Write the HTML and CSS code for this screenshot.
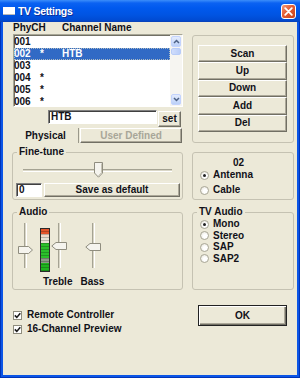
FILE: index.html
```html
<!DOCTYPE html>
<html>
<head>
<meta charset="utf-8">
<title>TV Settings</title>
<link rel="stylesheet" href="styles.css">
</head>
<body>
<div class="window">
  <div class="titlebar">
    <span class="app-icon"></span>
    <span class="title">TV Settings</span>
    <span class="close"><svg width="9" height="9" viewBox="0 0 9 9"><path d="M1.2 1.2L7.8 7.8M7.8 1.2L1.2 7.8" stroke="#fff" stroke-width="1.8" stroke-linecap="round"/></svg></span>
  </div>
  <div class="body">
    <div class="sec">
      <div class="col-left">
        <div class="list-head"><span class="h-phy">PhyCH</span><span>Channel Name</span></div>
        <div class="list">
          <div class="rows">
            <div class="row"><span class="c-num">001</span><span class="c-star"></span><span class="c-name"></span></div>
            <div class="row sel"><span class="c-num">002</span><span class="c-star">*</span><span class="c-name">HTB</span></div>
            <div class="row"><span class="c-num">003</span><span class="c-star"></span><span class="c-name"></span></div>
            <div class="row"><span class="c-num">004</span><span class="c-star">*</span><span class="c-name"></span></div>
            <div class="row"><span class="c-num">005</span><span class="c-star">*</span><span class="c-name"></span></div>
            <div class="row"><span class="c-num">006</span><span class="c-star">*</span><span class="c-name"></span></div>
          </div>
          <div class="scrollbar">
            <div class="sb-btn"><svg width="7" height="5" viewBox="0 0 7 5"><path d="M1 4L3.5 1.5L6 4" fill="none" stroke="#4D6185" stroke-width="1.5"/></svg></div>
            <div class="sb-thumb"></div>
            <div class="sb-space"></div>
            <div class="sb-btn"><svg width="7" height="5" viewBox="0 0 7 5"><path d="M1 1L3.5 3.5L6 1" fill="none" stroke="#4D6185" stroke-width="1.5"/></svg></div>
          </div>
        </div>
        <div class="name-row">
          <div class="edit name-edit">HTB</div>
          <div class="btn set-btn">set</div>
        </div>
        <div class="tabs">
          <div class="tab-on">Physical</div>
          <div class="btn disabled">User Defined</div>
        </div>
      </div>
      <div class="group btn-group">
        <div class="btn">Scan</div>
        <div class="btn">Up</div>
        <div class="btn">Down</div>
        <div class="btn">Add</div>
        <div class="btn">Del</div>
      </div>
    </div>

    <div class="sec">
      <div class="group fine">
        <span class="legend">Fine-tune</span>
        <div class="hslider">
          <div class="htrack"></div>
          <svg class="hthumb" width="9" height="16" viewBox="0 0 9 16"><path d="M0.5 0.5H8.5V11L4.5 15.2L0.5 11Z" fill="#F5F4EE" stroke="#8F8D7F"/><path d="M7.5 1.5V10.6L4.5 13.8" fill="none" stroke="#C5C2B2"/></svg>
        </div>
        <div class="save-row">
          <div class="edit zero">0</div>
          <div class="btn save">Save as default</div>
        </div>
      </div>
      <div class="group source">
        <div class="src-title">02</div>
        <div class="radio-item"><span class="radio on"></span>Antenna</div>
        <div class="radio-item cable"><span class="radio"></span>Cable</div>
      </div>
    </div>

    <div class="sec">
      <div class="group audio">
        <span class="legend">Audio</span>
        <div class="sliders">
          <div class="vcol vol">
            <div class="vtrack"></div>
            <svg class="vthumb" width="15" height="8" viewBox="0 0 15 8"><path d="M0.5 0.5H10.5L14.5 4L10.5 7.5H0.5Z" fill="#F5F4EE" stroke="#8F8D7F"/></svg>
          </div>
          <div class="meter"></div>
          <div class="vcol treble">
            <div class="vtrack"></div>
            <svg class="vthumb" width="16" height="8" viewBox="0 0 16 8"><path d="M15.5 0.5H5L0.8 4L5 7.5H15.5Z" fill="#F5F4EE" stroke="#8F8D7F"/></svg>
          </div>
          <div class="vcol bass">
            <div class="vtrack"></div>
            <svg class="vthumb" width="16" height="8" viewBox="0 0 16 8"><path d="M15.5 0.5H5L0.8 4L5 7.5H15.5Z" fill="#F5F4EE" stroke="#8F8D7F"/></svg>
          </div>
        </div>
        <div class="vlabels"><span class="lbl-treble">Treble</span><span class="lbl-bass">Bass</span></div>
      </div>
      <div class="group tvaudio">
        <span class="legend">TV Audio</span>
        <div class="radio-item"><span class="radio on"></span>Mono</div>
        <div class="radio-item"><span class="radio"></span>Stereo</div>
        <div class="radio-item"><span class="radio"></span>SAP</div>
        <div class="radio-item"><span class="radio"></span>SAP2</div>
      </div>
    </div>

    <div class="sec">
      <div class="checks">
        <div class="check-item"><span class="check"><svg width="7" height="7" viewBox="0 0 7 7"><path d="M0.8 3.4L2.8 5.4L6.3 1.3" fill="none" stroke="#1A1A1A" stroke-width="1.6"/></svg></span>Remote Controller</div>
        <div class="check-item"><span class="check"><svg width="7" height="7" viewBox="0 0 7 7"><path d="M0.8 3.4L2.8 5.4L6.3 1.3" fill="none" stroke="#1A1A1A" stroke-width="1.6"/></svg></span>16-Channel Preview</div>
      </div>
      <div class="btn ok">OK</div>
    </div>
  </div>
</div>
</body>
</html>
```

FILE: styles.css
```css
* { box-sizing: border-box; }
html, body { margin: 0; padding: 0; }
body {
  width: 300px;
  height: 378px;
  overflow: hidden;
  background: #fff;
  font-family: "Liberation Sans", Arial, sans-serif;
  font-weight: bold;
  font-size: 10px;
  line-height: 12px;
  color: #111118;
}

.window {
  width: 300px;
  height: 378px;
  display: flex;
  flex-direction: column;
  padding: 0 3px 3px;
  background: #0B55E6;
  box-shadow: inset 1px 0 #0034B8, inset -1px 0 #0034B8, inset 0 -1px #0034B8;
}

.titlebar {
  height: 22px;
  margin: 0 -3px;
  padding: 0 4px 0 3px;
  display: flex;
  align-items: center;
  background: linear-gradient(to bottom, #3C8EFA 0, #0B62F2 3px, #0059EE 8px, #0054E2 15px, #004BD3 20px, #0A40B5 22px);
}
.app-icon {
  width: 12px;
  height: 8px;
  margin-right: 3px;
  background: #fff;
  border-bottom: 1px solid #B8B8B8;
}
.title {
  flex: 1;
  color: #fff;
  font-size: 10.5px;
  letter-spacing: -0.3px;
  text-shadow: 1px 1px 0 #0A2F9C;
}
.close {
  width: 15px;
  height: 15px;
  margin-top: 1px;
  border: 1px solid #fff;
  border-radius: 3px;
  background: linear-gradient(135deg, #F3997A 0%, #E35C33 45%, #C8441D 100%);
  display: flex;
  align-items: center;
  justify-content: center;
}

.body {
  flex: 1;
  background: #ECE9D8;
  padding: 0 3px 0 9px;
}
.sec {
  display: grid;
  grid-template-columns: 171px 102px;
  column-gap: 9px;
  align-items: start;
}

/* list */
.list-head { height: 12px; display: flex; padding-left: 1px; }
.h-phy { width: 49px; }
.list {
  margin-left: 1px;
  height: 73px;
  display: flex;
  background: #fff;
  border: 1px solid;
  border-color: #A7A696 #FFFFFF #FFFFFF #A7A696;
  box-shadow: inset 1px 1px #716F64;
}
.rows { flex: 1; padding-top: 1px; overflow: hidden; }
.row { height: 12px; display: flex; white-space: pre; }
.c-num { width: 26px; }
.c-star { width: 22px; }
.row.sel {
  background: #316AC5;
  color: #fff;
  outline: 1px dotted rgba(255, 240, 190, 0.6);
  outline-offset: -1px;
}
.scrollbar {
  width: 12px;
  background: #F6F5F1;
  display: flex;
  flex-direction: column;
  padding: 1px;
}
.sb-btn {
  height: 11px;
  border-radius: 2px;
  border: 1px solid #C3D3FD;
  background: linear-gradient(#E4ECFD, #BBD0F8);
  display: flex;
  align-items: center;
  justify-content: center;
}
.sb-thumb {
  height: 7px;
  margin-top: 1px;
  border-radius: 2px;
  border: 1px solid #B8CCF8;
  background: linear-gradient(to right, #D0DDFC, #B9CDF8);
}
.sb-space { flex: 1; }

/* controls */
.btn {
  display: flex;
  align-items: center;
  justify-content: center;
  background: #ECE9D8;
  border: 1px solid;
  border-color: #FFFFFF #716F64 #716F64 #FFFFFF;
  box-shadow: inset -1px -1px #ACA899;
  white-space: nowrap;
}
.btn.disabled { color: #A8A698; }
.edit {
  background: #fff;
  border: 1px solid;
  border-color: #808080 #FFFFFF #FFFFFF #808080;
  box-shadow: inset 1px 1px #404040;
  padding: 0 2px;
  line-height: 12px;
}

.name-row { display: flex; align-items: flex-start; margin-top: 3px; height: 17px; }
.name-edit { margin-left: 36px; width: 109px; height: 14px; }
.set-btn { width: 23px; height: 16px; margin-top: 1px; margin-left: 1px; }

.tabs { display: flex; margin-top: 1px; margin-left: 1px; height: 15px; }
.tab-on {
  width: 66px;
  display: flex;
  align-items: center;
  justify-content: center;
  border-right: 1px solid #9A988A;
}
.tabs .btn { width: 102px; margin-left: 1px; }

/* groups */
.group {
  position: relative;
  border: 1px solid #C5C2B2;
  border-radius: 3px;
}
.legend {
  position: absolute;
  top: -7px;
  left: 4px;
  padding: 0 2px;
  background: #ECE9D8;
  line-height: 12px;
}

.btn-group {
  margin-top: 13px;
  height: 108px;
  padding: 9px 6px 0 5px;
  display: flex;
  flex-direction: column;
}
.btn-group .btn { height: 17.4px; }

.fine { margin-top: 9px; height: 48px; padding: 8px 1px 2px 3px; }
.hslider { position: relative; height: 18px; margin: 0 9px 0 7px; padding-top: 8px; }
.htrack {
  height: 3px;
  border-top: 1px solid #A5A393;
  border-bottom: 1px solid #fff;
  background: #DAD7C8;
}
.hthumb { position: absolute; left: 71px; top: 1px; }
.save-row { display: flex; margin-top: 4px; height: 14px; }
.zero { width: 26px; height: 14px; }
.save { width: 136px; height: 14px; margin-left: 2px; }

.source { margin-top: 9px; height: 48px; padding-top: 4px; }
.src-title { height: 12px; text-align: center; padding-right: 9px; }
.radio-item { display: flex; align-items: center; height: 12px; padding-left: 7px; }
.radio-item.cable { margin-top: 3px; }
.radio {
  width: 9px;
  height: 9px;
  margin-right: 4px;
  border-radius: 50%;
  border: 1px solid #A9A797;
  background: radial-gradient(circle at 60% 60%, #FFFFFF 30%, #E2DFD2 100%);
  display: flex;
  align-items: center;
  justify-content: center;
}
.radio.on::after {
  content: "";
  width: 3px;
  height: 3px;
  border-radius: 50%;
  background: #222;
}

/* audio */
.audio { margin-top: 12px; height: 78px; padding: 9px 0 1px 0; }
.sliders { display: flex; align-items: flex-start; height: 51px; }
.vcol { position: relative; height: 47px; padding-top: 1px; display: flex; justify-content: center; }
.vtrack {
  width: 3px;
  height: 45px;
  border-left: 1px solid #A5A393;
  border-right: 1px solid #fff;
  background: #DAD7C8;
}
.vthumb { position: absolute; left: 1px; }
.vol { margin-left: 4px; width: 17px; }
.vol .vthumb { top: 24px; }
.meter {
  margin-left: 6px;
  margin-top: 6px;
  width: 10px;
  height: 44px;
  border: 1px solid #2A2A2A;
  background:
    repeating-linear-gradient(to bottom, transparent 0 2px, rgba(0, 0, 0, 0.22) 2px 3px),
    linear-gradient(to bottom, #E4542A 0 5px, #F1D8C8 5px 8px, #E6E2D4 8px 14px, #2BC02B 14px 29px, #8C9A86 29px 34px, #1FB51F 34px 44px);
}
.treble { width: 18px; }
.treble .vthumb { top: 20px; }
.bass { margin-left: 16px; width: 18px; }
.bass .vthumb { top: 21px; }
.vlabels { display: flex; margin-top: 3px; height: 12px; }
.lbl-treble { margin-left: 30px; }
.lbl-bass { margin-left: 8px; }

.tvaudio { margin-top: 12px; height: 78px; padding: 5.5px 0 0 7px; }
.tvaudio .radio-item { height: 11.5px; padding-left: 0; }

/* bottom */
.checks { padding-top: 18px; padding-left: 1px; }
.check-item { display: flex; align-items: center; height: 14px; }
.check {
  width: 9px;
  height: 9px;
  margin-right: 5px;
  border: 1px solid #8F8D7E;
  background: #fff;
  display: flex;
  align-items: center;
  justify-content: center;
}
.btn.ok {
  margin-top: 15px;
  margin-left: 6px;
  width: 89px;
  height: 21px;
  border: 1px solid #222;
  box-shadow: inset 1px 1px #fff, inset -1px -1px #716F64, inset -2px -2px #ACA899;
}
```
